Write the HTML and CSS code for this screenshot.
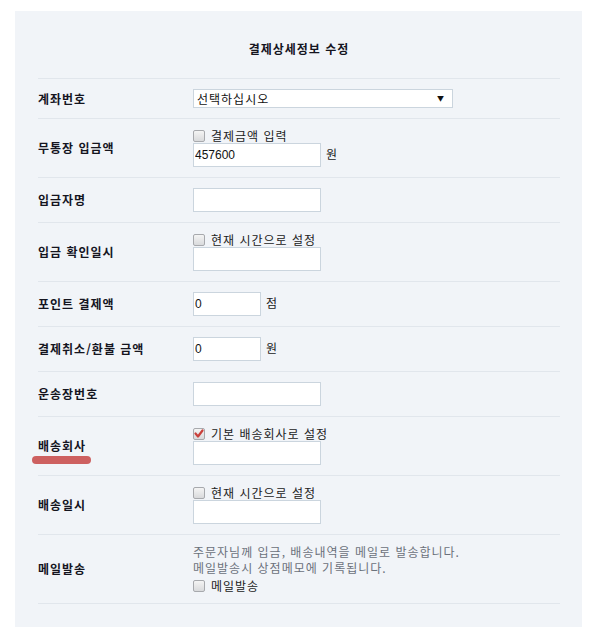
FILE: index.html
```html
<!DOCTYPE html>
<html lang="ko">
<head>
  <meta charset="UTF-8" />
  <title>결제상세정보 수정</title>
  <link rel="stylesheet" href="styles.css">
</head>
<body>
  <div class="panel">
    <h2 class="title">결제상세정보 수정</h2>

    <div class="row">
      <div class="label">계좌번호</div>
      <div class="value">
        <span class="select-wrap">
          <select class="select">
            <option>선택하십시오</option>
          </select>
        </span>
      </div>
    </div>

    <div class="row">
      <div class="label">무통장 입금액</div>
      <div class="value">
        <label class="check"><span class="box"></span>결제금액 입력</label>
        <div class="field"><input class="input" type="text" value="457600"><span class="unit">원</span></div>
      </div>
    </div>

    <div class="row">
      <div class="label">입금자명</div>
      <div class="value">
        <input class="input" type="text">
      </div>
    </div>

    <div class="row">
      <div class="label">입금 확인일시</div>
      <div class="value">
        <label class="check"><span class="box"></span>현재 시간으로 설정</label>
        <input class="input" type="text">
      </div>
    </div>

    <div class="row">
      <div class="label">포인트 결제액</div>
      <div class="value">
        <div class="field"><input class="input small" type="text" value="0"><span class="unit">점</span></div>
      </div>
    </div>

    <div class="row">
      <div class="label">결제취소/환불 금액</div>
      <div class="value">
        <div class="field"><input class="input small" type="text" value="0"><span class="unit">원</span></div>
      </div>
    </div>

    <div class="row">
      <div class="label">운송장번호</div>
      <div class="value">
        <input class="input" type="text">
      </div>
    </div>

    <div class="row">
      <div class="label"><span class="marked">배송회사</span></div>
      <div class="value">
        <label class="check">
          <span class="box checked">
            <svg width="12" height="12" viewBox="0 0 12 12"><path d="M2.5 5.5 L5 8.5 L9.5 2.5" fill="none" stroke="#c9403c" stroke-width="2.2" stroke-linecap="round" stroke-linejoin="round"/></svg>
          </span>기본 배송회사로 설정</label>
        <input class="input" type="text">
      </div>
    </div>

    <div class="row">
      <div class="label">배송일시</div>
      <div class="value">
        <label class="check"><span class="box"></span>현재 시간으로 설정</label>
        <input class="input" type="text">
      </div>
    </div>

    <div class="row mail-row">
      <div class="label">메일발송</div>
      <div class="value">
        <p class="note">주문자님께 입금, 배송내역을 메일로 발송합니다.<br>메일발송시 상점메모에 기록됩니다.</p>
        <label class="check mail"><span class="box"></span>메일발송</label>
      </div>
    </div>
  </div>
</body>
</html>
```

FILE: styles.css
```css
:root {
  --panel-bg: #f1f4f8;
  --line-color: #e1e6ec;
  --border-color: #cbd5de;
  --label-color: #15151f;
  --text-color: #222;
  --note-color: #6b717b;
}

body {
  margin: 0;
  background: #fff;
  font-family: "Noto Sans CJK KR", "Liberation Sans", sans-serif;
  font-size: 12px;
  letter-spacing: 1px;
  color: var(--text-color);
}

.panel {
  width: 567px;
  box-sizing: border-box;
  margin: 11px 0 0 15px;
  padding: 30px 22px 23px 23px;
  background: var(--panel-bg);
}

.title {
  margin: 0;
  padding-bottom: 21px;
  border-bottom: 1px solid var(--line-color);
  font-size: 12px;
  line-height: 16px;
  font-weight: bold;
  text-align: center;
  color: var(--label-color);
}

.row {
  display: grid;
  grid-template-columns: 155px 1fr;
  align-items: center;
  padding: 10px 0;
  border-bottom: 1px solid var(--line-color);
}

.mail-row {
  padding: 9px 0 10px;
}

.label {
  font-weight: bold;
  color: var(--label-color);
  line-height: 14px;
}

.marked {
  position: relative;
}

.marked::after {
  content: "";
  position: absolute;
  left: -6px;
  top: 19px;
  width: 59px;
  height: 8px;
  border-radius: 5px;
  background: #cd6060;
}

.value {
  display: flex;
  flex-direction: column;
  align-items: flex-start;
}

.select-wrap {
  position: relative;
  display: inline-block;
}

.select-wrap::after {
  content: "▼";
  position: absolute;
  right: 8px;
  top: 5px;
  font-size: 7px;
  line-height: 9px;
  color: #111;
  pointer-events: none;
}

.select {
  appearance: none;
  -webkit-appearance: none;
  width: 260px;
  height: 19px;
  margin: 0;
  padding: 0 0 0 3px;
  border: 1px solid var(--border-color);
  border-radius: 0;
  background: #fff;
  font-family: inherit;
  font-size: 12px;
  letter-spacing: 1px;
  line-height: 17px;
  color: #111;
}

.check {
  display: flex;
  align-items: center;
  gap: 6px;
  height: 14px;
  line-height: 14px;
  color: var(--text-color);
}

.box {
  display: inline-block;
  width: 12px;
  height: 12px;
  box-sizing: border-box;
  border: 1px solid #a7a9ad;
  border-radius: 2px;
  background: linear-gradient(#f4f4f4, #d9dadc);
}

.box svg {
  display: block;
  margin: -1px;
}

.field {
  display: flex;
  align-items: center;
}

.input {
  width: 128px;
  height: 24px;
  box-sizing: border-box;
  margin: 0;
  padding: 0 1px;
  border: 1px solid var(--border-color);
  background: #fff;
  font-family: "Liberation Sans", sans-serif;
  font-size: 12px;
  letter-spacing: 0;
  color: #111;
}

.input.small {
  width: 68px;
}

.unit {
  margin-left: 5px;
  line-height: 14px;
  margin-top: -2px;
}

.note {
  margin: 0;
  line-height: 16px;
  color: var(--note-color);
}

.check.mail {
  margin-top: 3px;
}
```
